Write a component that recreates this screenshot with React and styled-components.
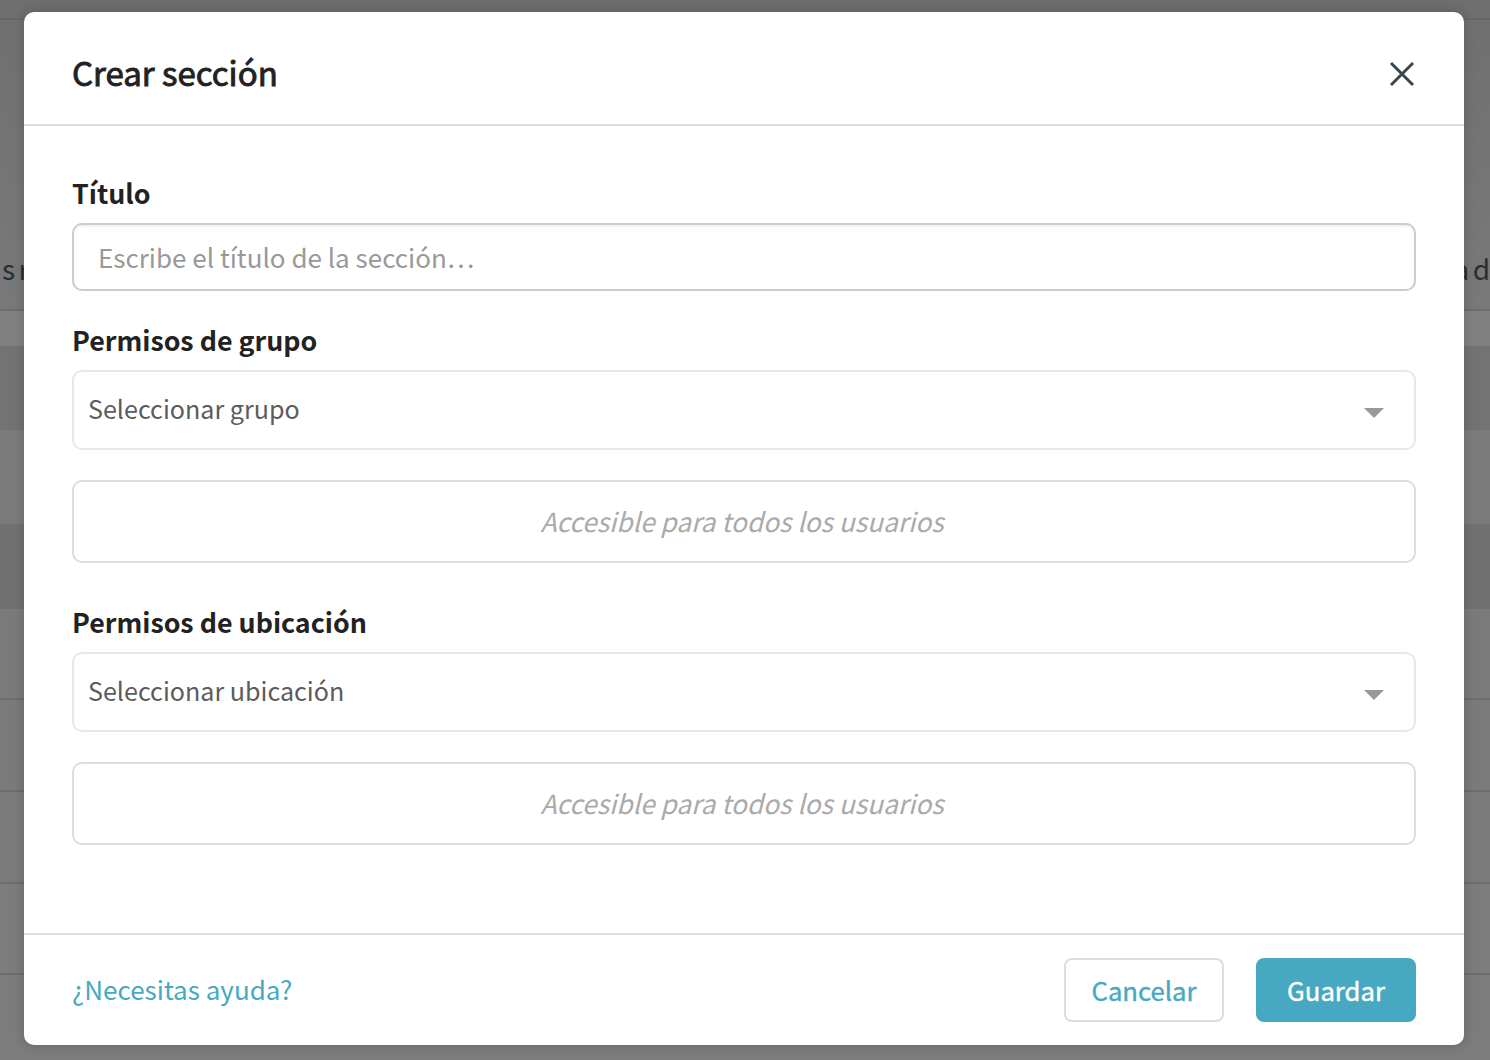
import React from "react";
import styled, { createGlobalStyle } from "styled-components";

const GlobalStyle = createGlobalStyle`
  html, body {
    margin: 0;
    padding: 0;
    height: 100%;
    overflow: hidden;
    background-color: #7c7c7c;
  }
  * {
    box-sizing: border-box;
  }
  body {
    font-family: "Noto Sans CJK JP", "Open Sans", "Liberation Sans", sans-serif;
  }
`;

const Page = styled.div`
  position: relative;
  width: 1490px;
  height: 1060px;
  overflow: hidden;
`;

const BackTop = styled.div`
  height: 20px;
  background-color: #6e6e6e;
  border-bottom: 2px solid #666;
`;

const BackHead = styled.div`
  height: 291px;
  padding: 0 0 21px 2px;
  display: flex;
  justify-content: space-between;
  align-items: flex-end;
  background: linear-gradient(#707070, #797979);
  border-bottom: 2px solid #6c6c6c;
  color: #243038;
  font-size: 28px;
  line-height: 40px;
  word-spacing: -3px;
`;

const BackRow = styled.div`
  height: ${(p) => p.$h}px;
  background-color: ${(p) => p.$bg};
  border-bottom: ${(p) => (p.$line ? "2px solid #6e6e6e" : "none")};
`;

const Modal = styled.div`
  position: absolute;
  left: 24px;
  top: 12px;
  width: 1440px;
  height: 1033px;
  display: flex;
  flex-direction: column;
  background-color: #fff;
  border-radius: 10px;
  box-shadow: 0 0 12px rgba(0, 0, 0, 0.18);
`;

const Header = styled.div`
  height: 114px;
  padding: 12px 49px 0 48px;
  display: flex;
  justify-content: space-between;
  align-items: center;
  border-bottom: 2px solid #dcdce2;
`;

const Title = styled.h2`
  margin: 0;
  padding-bottom: 4px;
  font-size: 33px;
  font-weight: 400;
  line-height: 44px;
  color: #222;
  -webkit-text-stroke: 0.9px #222;
`;

const CloseButton = styled.button`
  width: 26px;
  height: 26px;
  padding: 0;
  display: flex;
  border: none;
  background: none;
  color: #37474f;
`;

const Body = styled.div`
  flex: 1;
  padding: 48px 48px 0;
`;

const Label = styled.label`
  display: block;
  height: 40px;
  margin-bottom: 9px;
  font-size: 26.8px;
  font-weight: 700;
  line-height: 38px;
  color: #222;
`;

const TextInput = styled.input`
  display: block;
  width: 100%;
  height: 68px;
  margin-bottom: 30px;
  padding: 0 24px 2px;
  border: 2px solid #ccc;
  border-radius: 10px;
  outline: none;
  font-family: inherit;
  font-size: 26px;
  color: #222;
  box-shadow: inset 0 2px 2px rgba(0, 0, 0, 0.05);
  &::placeholder {
    color: #999;
    opacity: 1;
  }
`;

const Select = styled.div`
  height: 80px;
  margin-bottom: 30px;
  padding: 0 30px 4px 14px;
  display: flex;
  justify-content: space-between;
  align-items: center;
  border: 2px solid #e8e8e8;
  border-radius: 10px;
  font-size: 25.1px;
  color: #5c5c5c;
`;

const Arrow = styled.span`
  width: 0;
  height: 0;
  margin-top: 10px;
  border-left: 10px solid transparent;
  border-right: 10px solid transparent;
  border-top: 10px solid #999;
`;

const AccessBox = styled.div`
  height: 83px;
  margin-bottom: 40px;
  padding: 0 4px 2px 0;
  display: flex;
  justify-content: center;
  align-items: center;
  border: 2px solid #ddd;
  border-radius: 10px;
  font-size: 26.3px;
  font-style: italic;
  color: #aaa;
`;

const Footer = styled.div`
  height: 112px;
  padding: 23px 48px;
  display: flex;
  justify-content: space-between;
  align-items: center;
  border-top: 2px solid #dcdce2;
`;

const HelpLink = styled.a`
  padding-bottom: 4px;
  font-size: 26px;
  color: #47a9c1;
  text-decoration: none;
`;

const Actions = styled.div`
  display: flex;
  gap: 32px;
`;

const Button = styled.button`
  width: 160px;
  height: 64px;
  padding: 0 0 2px;
  border: 2px solid ${(p) => (p.$primary ? "#47a9c1" : "#dcdce2")};
  border-radius: 8px;
  background-color: ${(p) => (p.$primary ? "#47a9c1" : "#fff")};
  color: ${(p) => (p.$primary ? "#fff" : "#47a9c1")};
  font-family: inherit;
  font-size: 25.7px;
  font-weight: 400;
  -webkit-text-stroke: 0.4px ${(p) => (p.$primary ? "#fff" : "#47a9c1")};
`;

const backRows = [
  { h: 35, bg: "#808080" },
  { h: 84, bg: "#737373" },
  { h: 94, bg: "#7b7b7b" },
  { h: 85, bg: "#717171" },
  { h: 91, bg: "#7a7a7a", line: true },
  { h: 92, bg: "#7a7a7a", line: true },
  { h: 92, bg: "#7b7b7b", line: true },
  { h: 91, bg: "#7c7c7c", line: true },
  { h: 85, bg: "#7c7c7c" },
];

function PermissionField({ label, placeholder }) {
  return (
    <>
      <Label>{label}</Label>
      <Select>
        {placeholder}
        <Arrow />
      </Select>
      <AccessBox>Accesible para todos los usuarios</AccessBox>
    </>
  );
}

function App() {
  return (
    <Page>
      <GlobalStyle />
      <BackTop />
      <BackHead>
        <span>s r</span>
        <span>a d</span>
      </BackHead>
      {backRows.map((row, i) => (
        <BackRow key={i} $h={row.h} $bg={row.bg} $line={row.line} />
      ))}

      <Modal>
        <Header>
          <Title>Crear sección</Title>
          <CloseButton aria-label="Cerrar">
            <svg width="26" height="26" viewBox="0 0 26 26" fill="none" stroke="currentColor" strokeWidth="3">
              <path d="M2 2 L24 24 M24 2 L2 24" />
            </svg>
          </CloseButton>
        </Header>
        <Body>
          <Label>Título</Label>
          <TextInput placeholder="Escribe el título de la sección…" />
          <PermissionField label="Permisos de grupo" placeholder="Seleccionar grupo" />
          <PermissionField label="Permisos de ubicación" placeholder="Seleccionar ubicación" />
        </Body>
        <Footer>
          <HelpLink href="#">¿Necesitas ayuda?</HelpLink>
          <Actions>
            <Button>Cancelar</Button>
            <Button $primary>Guardar</Button>
          </Actions>
        </Footer>
      </Modal>
    </Page>
  );
}

export default App;
